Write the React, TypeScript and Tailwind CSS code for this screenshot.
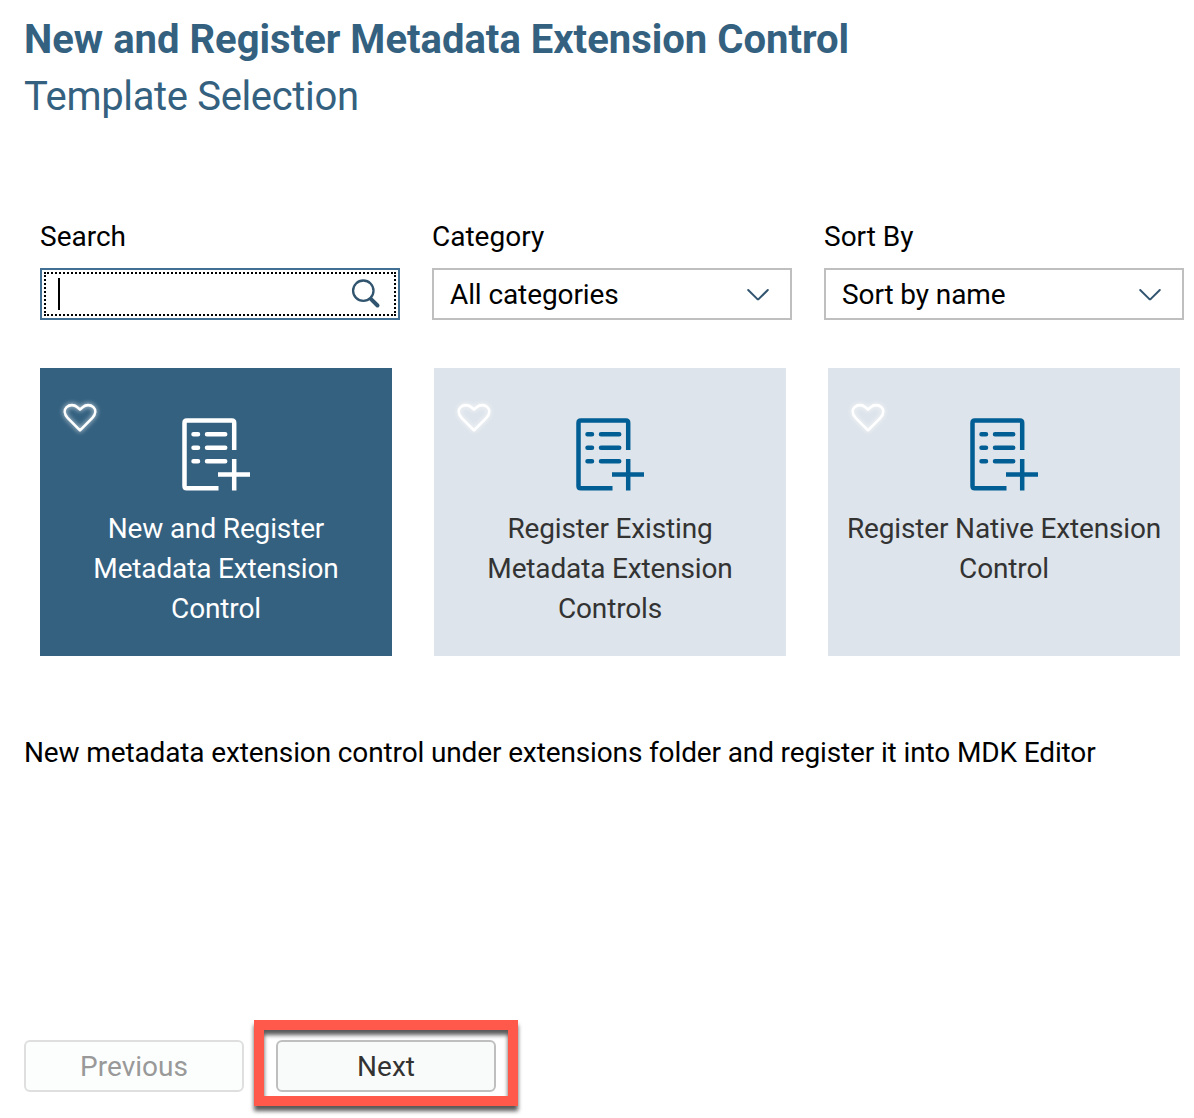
import type { ReactNode } from "react";

function HeartIcon() {
  return (
    <svg
      className="absolute top-8 left-[19px] h-9 w-[42px] overflow-visible drop-shadow-[0_0_2.5px_rgba(255,255,255,0.9)]"
      viewBox="0 0 42 36"
      fill="none"
      stroke="#fff"
      strokeWidth="2.6"
      strokeLinejoin="round"
    >
      <path d="M21 30.4 L8.6 17.8 C5.2 14.2 4.9 9.8 7.6 7.1 C10.6 4.4 15.4 4.6 18 7 L21 9.6 L24 7 C26.6 4.6 31.4 4.4 34.4 7.1 C37.1 9.8 36.8 14.2 33.4 17.8 Z" />
    </svg>
  );
}

function FormAddIcon() {
  return (
    <svg className="h-[73px] w-[68px]" viewBox="0 0 68 73" fill="none" stroke="currentColor" strokeWidth="4.5">
      <path d="M36.5 70.2 H4.8 Q2.5 70.2 2.5 67.9 V4.9 Q2.5 2.6 4.8 2.6 H49.9 Q52.2 2.6 52.2 4.9 V32" />
      <path d="M36 56.6 H68 M52.2 41 V72.5" />
      <path strokeLinecap="round" d="M11.5 16.2 H16 M25 16.2 H43.2 M11.5 29.7 H16 M25 29.7 H43.2 M11.5 43.2 H16 M25 43.2 H43.2" />
    </svg>
  );
}

function Field({ label, children }: { label: string; children: ReactNode }) {
  return (
    <div className="w-[360px]">
      <div className="h-[51px] leading-10">{label}</div>
      {children}
    </div>
  );
}

function Select({ value }: { value: string }) {
  return (
    <div className="flex h-[52px] items-center justify-between border-2 border-[#bfbfbf] bg-white pr-5 pl-4">
      <span className="pt-0.5 tracking-[-0.1px]">{value}</span>
      <svg className="h-6 w-6" viewBox="0 0 24 24" fill="none" stroke="#31546f" strokeWidth="2" strokeLinecap="round" strokeLinejoin="round">
        <path d="M2.2 8 L11.2 16.9 Q12 17.6 12.8 16.9 L21.8 8" />
      </svg>
    </div>
  );
}

function Tile({ lines, selected = false }: { lines: string[]; selected?: boolean }) {
  return (
    <div
      className={
        selected
          ? "relative flex h-72 w-[352px] flex-col items-center bg-[#346180] pt-[50px] text-white"
          : "relative flex h-72 w-[352px] flex-col items-center bg-[#dde4eb] pt-[50px] text-[#333]"
      }
    >
      <HeartIcon />
      <div className={selected ? "text-white" : "mr-px text-[#005e95]"}>
        <FormAddIcon />
      </div>
      <div className="mt-[18px] text-center leading-10 tracking-[-0.15px] whitespace-nowrap">
        {lines.map((line) => (
          <div key={line}>{line}</div>
        ))}
      </div>
    </div>
  );
}

export default function App() {
  return (
    <div className="flex h-[1118px] w-[1194px] flex-col overflow-hidden bg-white font-['Roboto',sans-serif] text-[28px] font-[450] text-black">
      <header className="pt-3 pl-6 text-[40px] text-[#346180]">
        <h1 className="leading-[56px] font-bold">New and Register Metadata Extension Control</h1>
        <h2 className="leading-[58px] tracking-[-0.35px]">Template Selection</h2>
      </header>

      <div className="mt-[91px] flex gap-8 pl-10">
        <Field label="Search">
          <div className="h-[52px] border-2 border-[#426f94] p-0.5">
            <div className="flex h-full items-center justify-between border-2 border-dotted border-black pr-[13px] pl-3">
              <span className="h-8 w-0.5 bg-black" />
              <svg className="h-8 w-8" viewBox="0 0 32 32" fill="none" stroke="#31546f" strokeLinecap="round">
                <circle cx="14.3" cy="12.7" r="10.2" strokeWidth="2.3" />
                <path d="M22.3 21.3 L28.5 27.5" strokeWidth="4" />
              </svg>
            </div>
          </div>
        </Field>
        <Field label="Category">
          <Select value="All categories" />
        </Field>
        <Field label="Sort By">
          <Select value="Sort by name" />
        </Field>
      </div>

      <div className="mt-12 flex gap-[42px] pl-10">
        <Tile selected lines={["New and Register", "Metadata Extension", "Control"]} />
        <Tile lines={["Register Existing", "Metadata Extension", "Controls"]} />
        <Tile lines={["Register Native Extension", "Control"]} />
      </div>

      <p className="mt-[77px] pl-6 leading-10 tracking-[-0.13px] whitespace-nowrap">
        New metadata extension control under extensions folder and register it into MDK Editor
      </p>

      <footer className="mt-auto mb-[26px] flex gap-8 pl-6">
        <button className="h-[52px] w-[220px] rounded-md border-2 border-[#dfdfdf] bg-[#fcfefd] pt-0.5 text-[#999]">Previous</button>
        <div className="relative">
          <div className="absolute -top-5 -left-[22px] h-[86px] w-[264px] border-10 border-[#ff594c] drop-shadow-[0_5px_2px_rgba(0,0,0,0.65)]" />
          <button className="relative h-[52px] w-[220px] rounded-md border-2 border-[#bfbfbf] bg-[#f9fbfa] pt-0.5 text-[#333]">Next</button>
        </div>
      </footer>
    </div>
  );
}
